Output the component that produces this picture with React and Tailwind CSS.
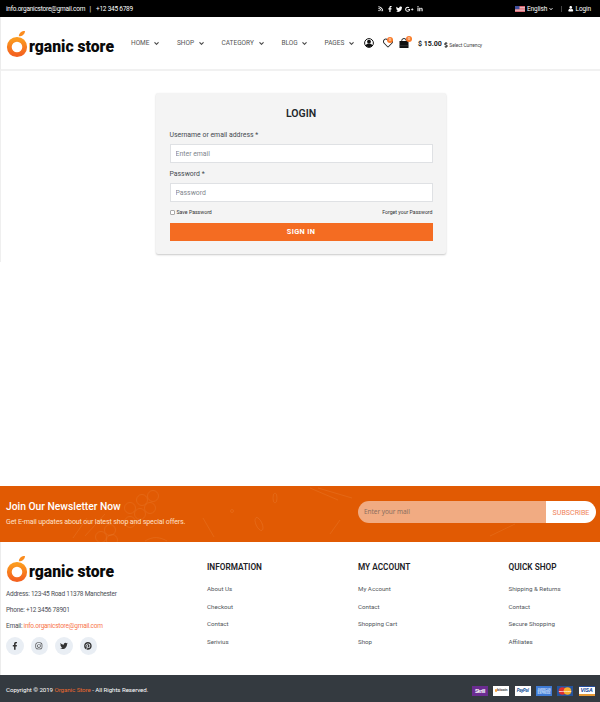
import { FaRss, FaFacebookF, FaTwitter, FaGooglePlusG, FaLinkedinIn, FaUser, FaInstagram, FaPinterest, FaRegHeart, FaChevronDown, FaDollarSign } from "react-icons/fa";

const roboto = "font-['Roboto','Liberation_Sans',sans-serif]";

function Logo() {
  return (
    <svg width="110" height="32" viewBox="0 0 110 32" className="block overflow-visible">
      <defs>
        <linearGradient id="orange" x1="0" y1="0" x2="0" y2="1">
          <stop offset="0" stopColor="#fb9a1f" />
          <stop offset="1" stopColor="#f4621f" />
        </linearGradient>
      </defs>
      <circle cx="11" cy="18" r="7.7" fill="none" stroke="url(#orange)" strokeWidth="4.800" />
      <path d="M12.8 7.300c.3-3.400 2.600-5.300 6.200-5.300c-.2 3.200-2.300 5.200-6.200 5.300z" fill="#fb8c1e" />
      <text x="23" y="22.700" fontSize="17" fontWeight="900" fill="#0a0a0a" textLength="85" lengthAdjust="spacingAndGlyphs">
        rganic store
      </text>
    </svg>
  );
}

function Flag() {
  return (
    <svg width="10" height="6" viewBox="0 0 10 6">
      <path fill="#f3d9dc" d="M0 0h10v6H0z" />
      <path stroke="#d2434f" strokeWidth=".8" d="M0 .5h10M0 2.200h10M0 3.900h10M0 5.600h10" />
      <path fill="#3f4f9c" d="M0 0h4.500v3.200H0z" />
    </svg>
  );
}

function NavItem({ label, className }) {
  return (
    <a className={"flex items-center justify-between " + className}>
      <span>{label}</span>
      <FaChevronDown size={5} color="#333" stroke="#333" strokeWidth="30" />
    </a>
  );
}

function Account() {
  return (
    <svg width="10" height="10" viewBox="0 0 20 20">
      <circle cx="10" cy="10" r="8.800" fill="none" stroke="#111" strokeWidth="2" />
      <circle cx="10" cy="7.500" r="3.800" fill="#111" />
      <path d="M3.500 15c1-3 3.500-3.500 6.500-3.500s5.500.5 6.500 3.500c-3 4-10 4-13 0z" fill="#111" />
    </svg>
  );
}

function Bag() {
  return (
    <svg width="10" height="10" viewBox="0 0 20 20">
      <path d="M1 6h18v14H1z" fill="#111" />
      <path d="M5.500 9V5a4.500 4 0 0 1 9 0v4" fill="none" stroke="#111" strokeWidth="1.800" />
      <path d="M1 15.500h18" stroke="#555" strokeWidth="1" />
    </svg>
  );
}

function Badge({ className }) {
  return (
    <span className={"absolute flex h-[6px] w-[6px] items-center justify-center rounded-full bg-[#f97a2b] text-[4px] leading-none text-white " + className}>
      0
    </span>
  );
}

function Field({ label, placeholder }) {
  return (
    <label className="block">
      <span className="block h-[18px] text-[6.900px] leading-[19px] text-[#454a50]">{label}</span>
      <input
        placeholder={placeholder}
        className="block h-[19px] w-full border border-[#dfe1e4] bg-white px-[5px] text-[6.900px] outline-none placeholder:text-[#7f868d]"
      />
    </label>
  );
}

function Column({ title, items, className }) {
  return (
    <div className={className}>
      <h3 className="h-[20px] pt-[7.500px] text-[8.250px] leading-[12px] font-semibold whitespace-nowrap text-[#1c2126]">{title}</h3>
      <ul className="pt-[6.500px] text-[6.200px] text-[#50555a]">
        {items.map((item) => (
          <li key={item} className="h-[17.700px] leading-[18px] whitespace-nowrap">{item}</li>
        ))}
      </ul>
    </div>
  );
}

function Pattern() {
  const cells = [[130, 22], [140, 28], [150, 22], [142, 14], [153, 10], [130, 36], [110, 44], [101, 51], [112, 54]];
  return (
    <svg className="absolute inset-0" width="600" height="56" fill="none" stroke="#f19a5c" strokeOpacity=".25" strokeWidth=".8">
      {cells.map(([x, y]) => (
        <circle key={x + "-" + y} cx={x} cy={y} r="5.500" />
      ))}
      <path d="M73 52l14-20M85 50l20-22M203 32l11 19M310 2l28 12M318 2l34 10M490 50l25-12M330 48l10-14M145 55c8-5 15-4 22 0" />
      <ellipse cx="275" cy="12" rx="2" ry="5" />
      <ellipse cx="259" cy="38" rx="3" ry="7" transform="rotate(-25 259 38)" />
      <circle cx="232" cy="25" r="1.500" />
    </svg>
  );
}

function Cards() {
  const base = "flex h-[10px] w-[16px] items-center justify-center leading-none font-bold ";
  return (
    <div className="flex gap-[5.300px]">
      <span className={base + "bg-[#6b2c91] pt-px text-[5px] tracking-tighter text-white"}>Skrill</span>
      <span className={base + "bg-white text-[3.600px] text-[#4c4c4c]"}><i className="h-[3px] w-[2px] rounded-full bg-[#f2a33a]" />bitcoin</span>
      <span className={base + "bg-white pt-[2px] text-[4.400px] tracking-tighter text-[#20539c] italic"}>PayPal</span>
      <span className={base + "bg-[#3f7bd4]"}>
        <svg width="16" height="10" viewBox="0 0 16 10" fill="#c9defa" fontSize="3.200" textAnchor="middle">
          <text x="8" y="4.500" textLength="13" lengthAdjust="spacingAndGlyphs">AMERICAN</text>
          <text x="8" y="8" textLength="13" lengthAdjust="spacingAndGlyphs">EXPRESS</text>
        </svg>
      </span>
      <span className={base + "bg-[#25549c]"}>
        <svg width="14" height="8" viewBox="0 0 14 8">
          <circle cx="4.500" cy="4" r="3.800" fill="#df2f2f" />
          <circle cx="9.500" cy="4" r="3.800" fill="#f6ad2d" />
          <text x="7" y="5" textAnchor="middle" fontSize="2.500" fill="#fff" textLength="12" lengthAdjust="spacingAndGlyphs">MasterCard</text>
        </svg>
      </span>
      <span className={base + "border-t border-b-2 border-t-[#244d9b] border-b-[#e79a35] bg-white pt-px text-[5.800px] text-[#244d9b] italic"}>VISA</span>
    </div>
  );
}

export default function App() {
  return (
    <div className={"flex h-[702px] w-[600px] flex-col overflow-hidden bg-white " + roboto}>
      <div className="flex h-[17px] items-center bg-black pt-[1px] pl-[6px] text-[6.500px] leading-none text-white">
        <div className="flex w-[372px] tracking-[-0.24px] whitespace-nowrap">
          <span className="w-[83.500px]">info.organicstore@gmail.com</span>
          <span className="w-[6.500px]">|</span>
          <span>+12 345 6789</span>
        </div>
        <div className="flex w-[137px] items-center gap-[3px]">
          <FaRss size={5.500} />
          <FaFacebookF size={6} />
          <FaTwitter size={6.500} />
          <FaGooglePlusG size={8.500} />
          <FaLinkedinIn size={6} />
        </div>
        <div className="flex w-[47px] items-center gap-[2px] border-r border-[#444]">
          <Flag />
          <span className="tracking-[-0.1px]">English</span>
          <FaChevronDown size={4} />
        </div>
        <div className="flex items-center gap-[2px] pl-[6px]">
          <FaUser size={5.500} />
          <span className="tracking-[-0.1px]">Login</span>
        </div>
      </div>

      <header className="flex h-[54px] shrink-0 items-center border-b-2 border-l border-[#f1f1f1] border-l-[#ececec] pl-[5px]">
        <div className="w-[125px] pt-[4px]"><Logo /></div>
        <nav className="flex pt-[1px] text-[6.500px] leading-none text-[#555]">
          <NavItem label="HOME" className="mr-[18px] w-[28px]" />
          <NavItem label="SHOP" className="mr-[18px] w-[26.500px]" />
          <NavItem label="CATEGORY" className="mr-[18px] w-[42px]" />
          <NavItem label="BLOG" className="mr-[18px] w-[25px]" />
          <NavItem label="PAGES" className="w-[29.500px]" />
        </nav>
        <div className="flex items-center pl-[10px]">
          <Account />
          <span className="relative ml-[9px]"><FaRegHeart size={10} color="#222" /><Badge className="-top-[1px] right-0" /></span>
          <span className="relative ml-[6px]"><Bag /><Badge className="-top-[2px] -right-[3px]" /></span>
          <span className="ml-[9px] pt-[2px] text-[7.100px] font-bold tracking-[-0.050px] whitespace-nowrap text-[#222]">$ 15.00</span>
          <FaDollarSign className="mt-[4px] ml-[1.500px]" size={6} color="#222" />
          <span className="pt-[5px] text-[4.900px] tracking-[-0.080px] whitespace-nowrap text-[#444]">Select Currency</span>
        </div>
      </header>

      <main className="flex h-[415px] shrink-0 items-start">
        <div className="h-[191px] w-px bg-[#efefef]" />
        <form className="mt-[22px] ml-[155px] h-[161px] w-[290px] rounded-[2px] bg-[#f4f4f4] px-[13.500px] pt-[12.500px] shadow-[0_1px_2px_rgba(0,0,0,0.22)]">
          <h1 className="h-[20.500px] text-center text-[10.500px] leading-[16px] font-semibold text-[#22272c]">LOGIN</h1>
          <div className="flex flex-col gap-[2px]">
            <Field label="Username or email address *" placeholder="Enter email" />
            <Field label="Password *" placeholder="Password" />
          </div>
          <div className="flex h-[21px] items-center justify-between text-[5.200px] text-[#333]">
            <label className="flex items-center gap-[2px]">
              <span className="h-[5px] w-[5px] rounded-[1px] border border-[#aaa] bg-white" />
              Save Password
            </label>
            <a>Forget your Password</a>
          </div>
          <button type="button" className="block h-[17.500px] w-full bg-[#f46c22] text-[7.300px] leading-[18px] font-bold tracking-[0.350px] text-white">SIGN IN</button>
        </form>
      </main>

      <section className="relative flex h-[56px] shrink-0 justify-between bg-[#e15a03] pr-[4px] pl-[6px]">
        <Pattern />
        <div className="relative pt-[14px] text-white">
          <h2 className="text-[10.300px] leading-[14px] font-medium">Join Our Newsletter Now</h2>
          <p className="text-[7.100px] leading-[15px] tracking-[-0.150px] text-[#ffe0c8]">Get E-mail updates about our latest shop and special offers.</p>
        </div>
        <div className="relative mt-[15px] flex h-[22px] w-[238px] overflow-hidden rounded-full">
          <input placeholder="Enter your mail" className="w-[188px] bg-[#f1ab82] pl-[6px] font-['Noto_Sans',sans-serif] text-[6.500px] tracking-[-0.060px] outline-none placeholder:text-[#8b6f60]" />
          <button type="button" className="w-[50px] bg-white pt-[2px] text-[7.100px] text-[#f0835a]">SUBSCRIBE</button>
        </div>
      </section>

      <footer className="flex h-[133px] shrink-0 border-l border-[#ececec] pt-[11.500px] pl-[5px]">
        <div className="w-[201px] shrink-0">
          <Logo />
          <div className="text-[6.500px] leading-[16px] tracking-[-0.240px] text-[#4b5056]">
            <p>Address: 123-45 Road 11378 Manchester</p>
            <p>Phone: +12 3456 78901</p>
            <p>Email: <a className="text-[#f8754a]">info.organicstore@gmail.com</a></p>
          </div>
          <div className="mt-[3.500px] flex gap-[7px] text-[#333]">
            {[FaFacebookF, FaInstagram, FaTwitter, FaPinterest].map((Icon, i) => (
              <a key={i} className="flex h-[17.500px] w-[17.500px] items-center justify-center rounded-full bg-[#e9eef4]">
                <Icon size={7.800} />
              </a>
            ))}
          </div>
        </div>
        <Column className="w-[151px] shrink-0" title="INFORMATION" items={["About Us", "Checkout", "Contact", "Serivius"]} />
        <Column className="w-[150.500px] shrink-0" title="MY ACCOUNT" items={["My Account", "Contact", "Shopping Cart", "Shop"]} />
        <Column title="QUICK SHOP" items={["Shipping & Returns", "Contact", "Secure Shopping", "Affiliates"]} />
      </footer>

      <div className="flex h-[27px] shrink-0 items-center justify-between bg-[#343a40] pt-[4px] pr-[5.500px] pl-[6px] text-[6.200px] tracking-[-0.080px] text-white">
        <p>Copyright © 2019 <a className="text-[#e8692e]">Organic Store</a> - All Rights Reserved.</p>
        <Cards />
      </div>
    </div>
  );
}
